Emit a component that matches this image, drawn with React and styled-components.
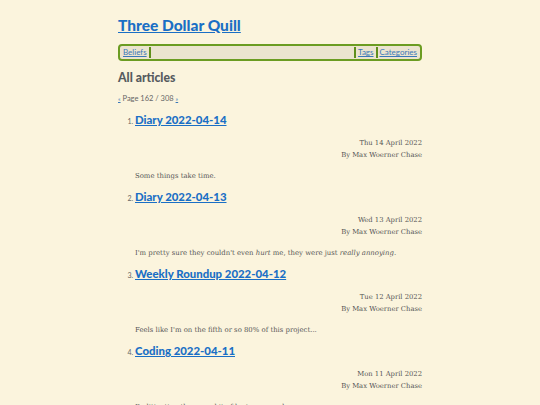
import React from "react";
import styled, { createGlobalStyle } from "styled-components";

const GlobalStyle = createGlobalStyle`
  html, body {
    margin: 0;
    padding: 0;
    background: #fbf4dd;
  }
  body {
    font-family: "DejaVu Serif", serif;
  }
`;

const Page = styled.div`
  width: 304px;
  margin: 0 auto;
  padding-top: 14px;
  color: #555;
`;

const SiteTitle = styled.h1`
  margin: 0;
  font-family: Lato, "Noto Sans", sans-serif;
  font-size: 15.5px;
  line-height: 22px;
  font-weight: 900;
  a {
    color: #1a6fc5;
  }
`;

const Nav = styled.nav`
  margin-top: 8px;
  height: 11px;
  display: flex;
  align-items: stretch;
  border: 2px solid #6b9c22;
  border-radius: 4px;
  background: #ebe4cf;
  padding: 1px 1px;
  font-family: Lato, "Noto Sans", sans-serif;
  font-size: 8px;
  line-height: 11px;
`;

const NavLink = styled.a`
  color: #3a78b8;
  padding: 0 2px;
`;

const Sep = styled.span`
  width: 2px;
  background: #5f8f1c;
`;

const Spacer = styled.span`
  flex: 1;
`;

const Heading = styled.h2`
  margin: 9px 0 0;
  font-family: Lato, "Noto Sans", sans-serif;
  font-size: 12.2px;
  line-height: 16px;
  font-weight: 900;
  color: #565b5f;
`;

const Pager = styled.p`
  margin: 8px 0 0;
  font-family: Lato, "Noto Sans", sans-serif;
  font-size: 7.5px;
  line-height: 10px;
  color: #666;
  a {
    color: #3a78b8;
    font-size: 6px;
  }
`;

const List = styled.ol`
  margin: 9px 0 0;
  padding-left: 17px;
  li::marker {
    font-family: Lato, "Noto Sans", sans-serif;
    font-size: 7px;
    color: #666;
  }
`;

const Item = styled.li`
  margin: 0 0 8px;
`;

const ItemTitle = styled.h3`
  margin: 0;
  font-family: Lato, "Noto Sans", sans-serif;
  font-size: 11.4px;
  line-height: 14px;
  font-weight: 900;
  a {
    color: #1a6fc5;
  }
`;

const Meta = styled.div`
  margin-top: 10px;
  text-align: right;
  font-size: 6.8px;
  line-height: 12px;
  color: #555;
`;

const Excerpt = styled.p`
  margin: 9px 0 0;
  font-size: 6.9px;
  line-height: 12px;
  color: #555;
`;

const articles = [
  {
    title: "Diary 2022-04-14",
    date: "Thu 14 April 2022",
    excerpt: <>Some things take time.</>,
  },
  {
    title: "Diary 2022-04-13",
    date: "Wed 13 April 2022",
    excerpt: (
      <>
        I'm pretty sure they couldn't even <em>hurt</em> me, they were just{" "}
        <em>really annoying</em>.
      </>
    ),
  },
  {
    title: "Weekly Roundup 2022-04-12",
    date: "Tue 12 April 2022",
    excerpt: <>Feels like I'm on the fifth or so 80% of this project...</>,
  },
  {
    title: "Coding 2022-04-11",
    date: "Mon 11 April 2022",
    excerpt: <>Re-litigating the same bit of logic over and over.</>,
  },
];

export default function App() {
  return (
    <>
      <GlobalStyle />
      <Page>
        <SiteTitle>
          <a href="#">Three Dollar Quill</a>
        </SiteTitle>
        <Nav>
          <NavLink href="#">Beliefs</NavLink>
          <Sep />
          <Spacer />
          <Sep />
          <NavLink href="#">Tags</NavLink>
          <Sep />
          <NavLink href="#">Categories</NavLink>
        </Nav>
        <Heading>All articles</Heading>
        <Pager>
          <a href="#">«</a> Page 162 / 308 <a href="#">»</a>
        </Pager>
        <List>
          {articles.map((a) => (
            <Item key={a.title}>
              <ItemTitle>
                <a href="#">{a.title}</a>
              </ItemTitle>
              <Meta>
                {a.date}
                <br />
                By Max Woerner Chase
              </Meta>
              <Excerpt>{a.excerpt}</Excerpt>
            </Item>
          ))}
        </List>
      </Page>
    </>
  );
}
